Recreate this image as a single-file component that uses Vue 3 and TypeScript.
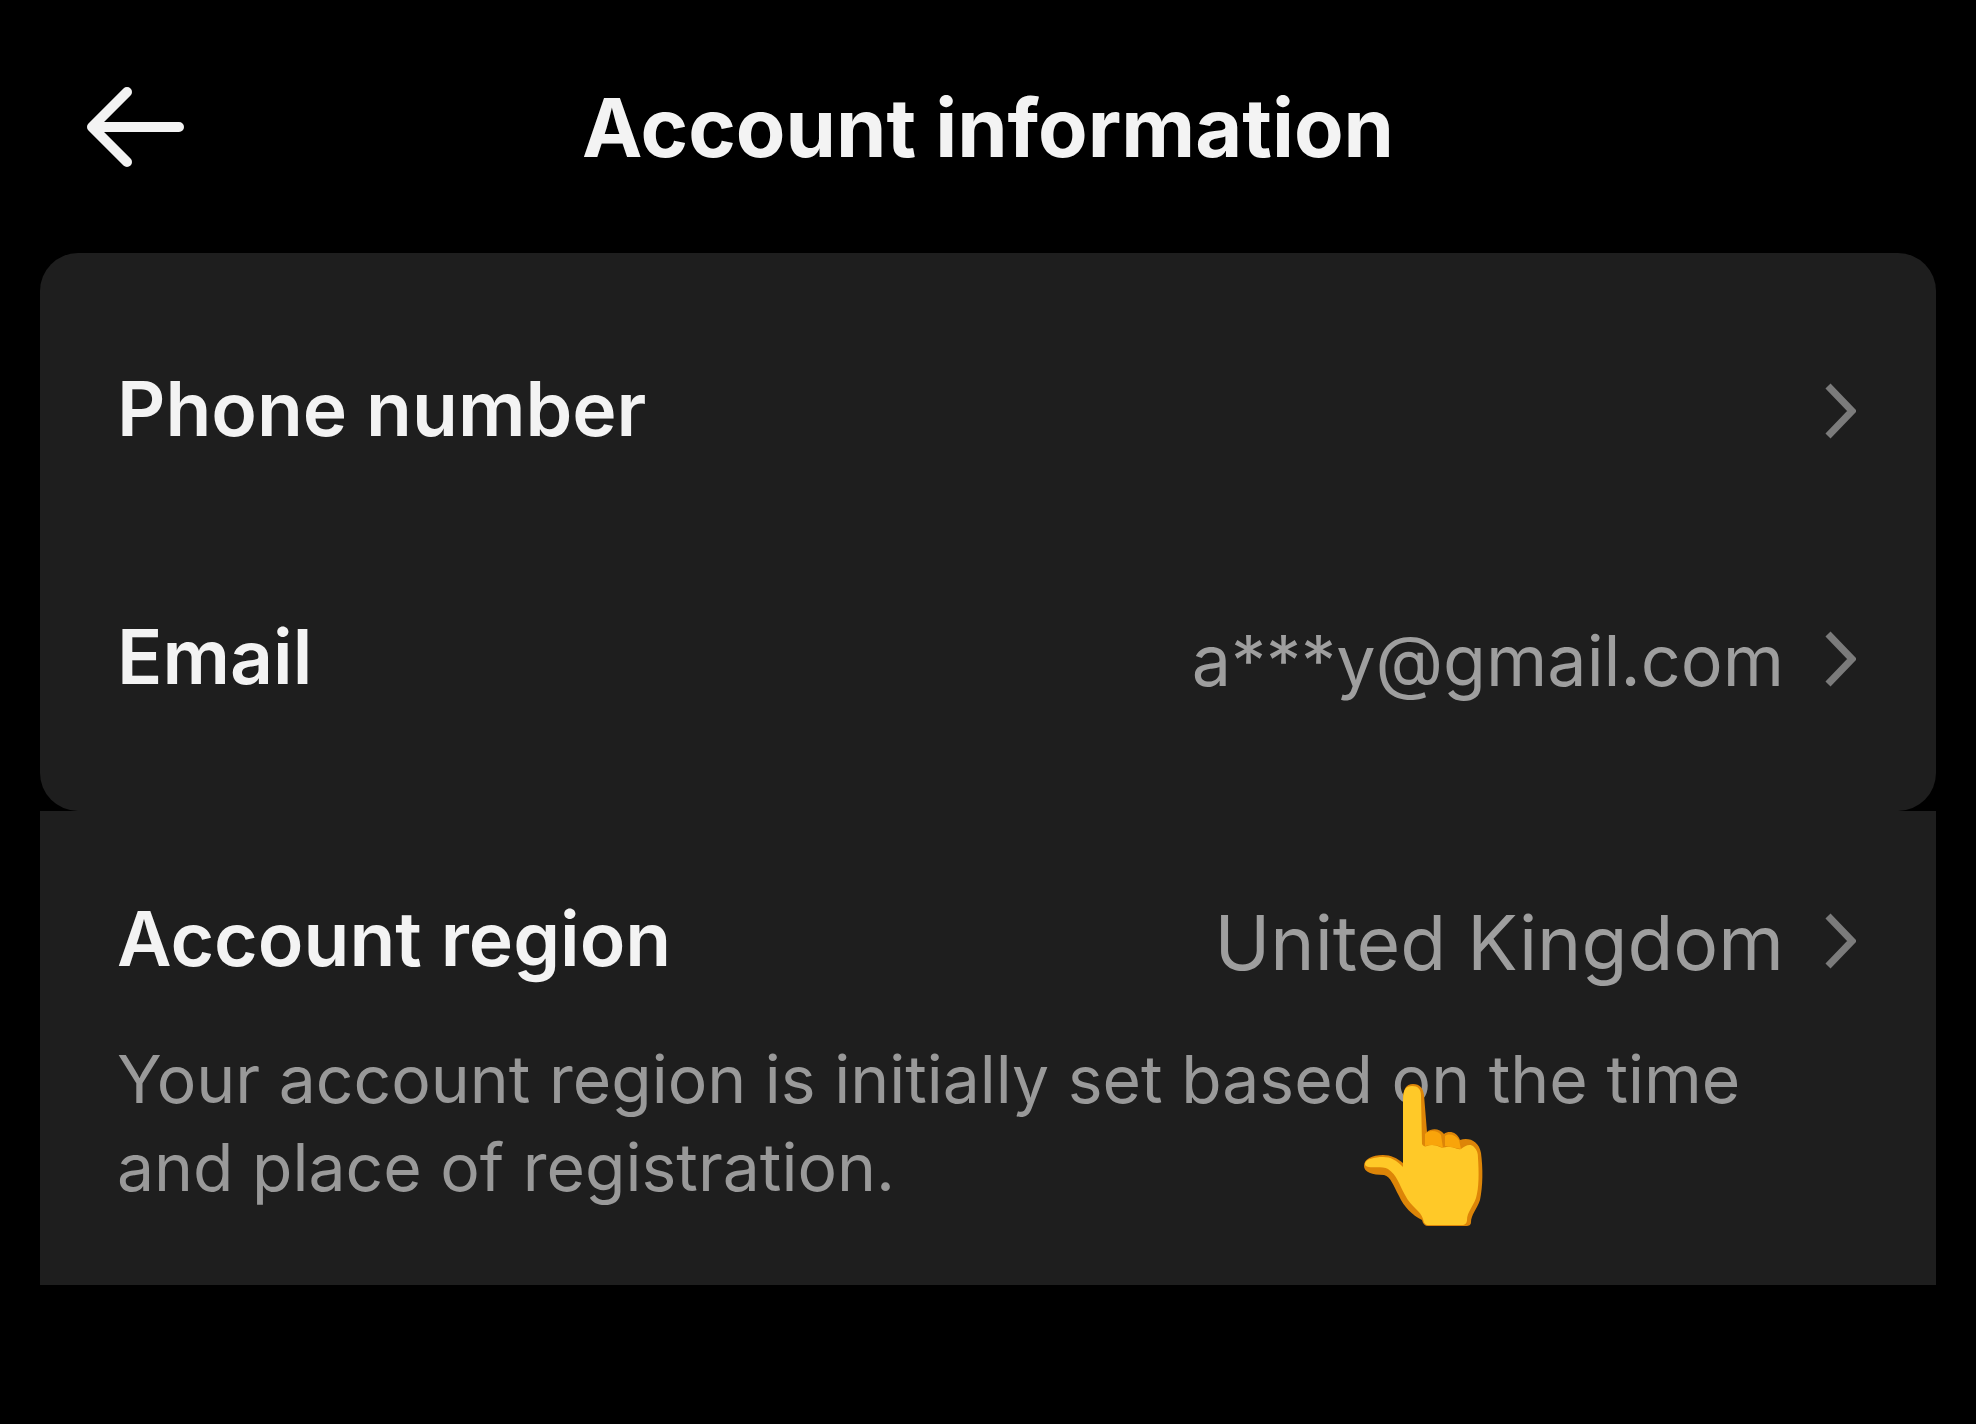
<script setup lang="ts">
interface Row {
  label: string
  value: string
  compact?: boolean
}

const contactRows: Row[] = [
  { label: 'Phone number', value: '' },
  { label: 'Email', value: 'a***y@gmail.com', compact: true },
]

const regionRow: Row = { label: 'Account region', value: 'United Kingdom' }
const regionNote =
  'Your account region is initially set based on the time and place of registration.'
</script>

<template>
  <div class="page">
    <header class="header">
      <button class="back" type="button" aria-label="Back">
        <svg class="back-icon" viewBox="0 0 104 88" aria-hidden="true">
          <path d="M43 9 8 44l35 35M10 44h85" />
        </svg>
      </button>
      <h1 class="title">Account information</h1>
    </header>

    <main class="content">
      <section class="card contact">
        <button v-for="row in contactRows" :key="row.label" class="row" type="button">
          <span class="label">{{ row.label }}</span>
          <span class="value" :class="{ compact: row.compact }">{{ row.value }}</span>
          <svg class="chevron" viewBox="0 0 32 60" aria-hidden="true">
            <path d="M4 5 28 30 4 55" />
          </svg>
        </button>
      </section>

      <section class="card region">
        <button class="row" type="button">
          <span class="label">{{ regionRow.label }}</span>
          <span class="value">{{ regionRow.value }}</span>
          <svg class="chevron" viewBox="0 0 32 60" aria-hidden="true">
            <path d="M4 5 28 30 4 55" />
          </svg>
        </button>
        <p class="note">{{ regionNote }}</p>

        <svg class="hand" viewBox="0 0 120 144" aria-hidden="true">
          <path
            class="hand-shade"
            d="M39 18C39 6 42 1 49 1c7 0 10 4 11 11l3 37c4-4 13-4 17 2 5-4 13-2 16 6 9-3 19 1 21 13 2 15 2 33-1 47-3 9-9 15-9 22 0 3-2 4-5 4H64c-3 0-5-2-6-6-10-5-18-13-23-24-6-11-8-19-15-21C8 92 0 89 0 83c0-7 8-11 19-11 8 0 14 3 20 8z"
          />
          <path
            class="hand-fill"
            d="M39 18C39 6 42 3 48 3c6 0 9 3 9 10l1 48c1 2 3 3 5 2 4-2 9-1 13 1 3 2 6-1 10 0 4 0 7 3 11 2 4-3 9-6 13-2 3 3 4 6 4 11 1 15 1 30-2 40-3 9-9 14-9 22 0 3-2 5-5 5H65c-4 0-5-2-6-6-2-8-12-12-18-24-6-11-8-20-17-26-7-4-23 1-23-5 0-5 10-7 18-7 8 0 13 3 20 10z"
          />
          <path class="hand-fold" d="M61 51c3-4 13-4 16 1l2 13c-5-3-11-4-18-2zM81 53c4-3 11-1 14 4l2 9c-5-1-10-2-16-3z" />
        </svg>
      </section>
    </main>
  </div>
</template>

<style>
body {
  margin: 0;
  background: #000;
}
</style>

<style scoped>
.page {
  min-height: 100vh;
  background: #000;
  color: #f3f3f3;
  font-family: Inter, 'Liberation Sans', sans-serif;
}

button {
  margin: 0;
  padding: 0;
  border: 0;
  background: none;
  color: inherit;
  font: inherit;
  text-align: left;
  cursor: pointer;
}

svg {
  display: block;
  fill: none;
}

.header {
  display: grid;
  grid-template-columns: 104px 1fr 104px;
  align-items: center;
  height: 253px;
  padding: 0 84px;
}

.back-icon {
  width: 104px;
  height: 88px;
  stroke: #f3f3f3;
  stroke-width: 10;
  stroke-linecap: round;
  stroke-linejoin: round;
}

.title {
  margin: 0;
  padding-top: 2px;
  font-size: 81px;
  font-weight: 700;
  line-height: 96px;
  text-align: center;
  white-space: nowrap;
}

.content {
  padding: 0 40px;
}

.card {
  background: #1e1e1e;
}

.contact {
  padding: 34px 0 28px;
  border-radius: 38px;
}

.row {
  display: flex;
  align-items: center;
  width: 100%;
  height: 248px;
  padding: 0 80px 0 77px;
}

.label {
  padding-bottom: 4px;
  font-size: 75px;
  font-weight: 600;
  line-height: 96px;
}

.value {
  flex: 1;
  padding-top: 4px;
  color: #9e9e9e;
  font-size: 75px;
  line-height: 96px;
  text-align: right;
}

.value.compact {
  font-size: 70px;
}

.chevron {
  width: 32px;
  height: 60px;
  margin-left: 40px;
  stroke: #7b7b7b;
  stroke-width: 7;
  stroke-linecap: butt;
  stroke-linejoin: miter;
}

.region {
  position: relative;
  padding: 80px 0 74px;
}

.region .row {
  height: 100px;
}

.note {
  margin: 44px 80px 0 77px;
  color: #999;
  font-size: 66px;
  line-height: 88px;
}

.hand {
  position: absolute;
  top: 272px;
  left: 1324px;
  width: 120px;
  height: 144px;
}

.hand-shade {
  fill: #dd8508;
}

.hand-fill {
  fill: #ffc928;
}

.hand-fold {
  fill: #f9a40a;
}
</style>
